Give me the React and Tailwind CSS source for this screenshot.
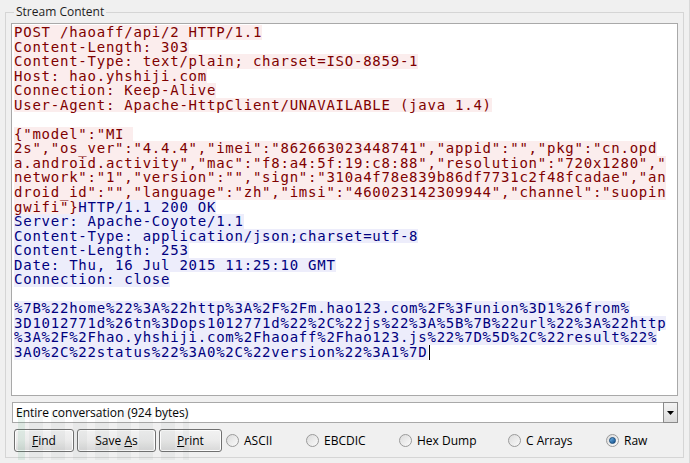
import React from 'react'

const REQ = 'text-[#7f0000] bg-[#fbeded]'
const RES = 'text-[#00007f] bg-[#ededfb]'

const LINES = [
  [['q', 'POST /haoaff/api/2 HTTP/1.1']],
  [['q', 'Content-Length: 303']],
  [['q', 'Content-Type: text/plain; charset=ISO-8859-1']],
  [['q', 'Host: hao.yhshiji.com']],
  [['q', 'Connection: Keep-Alive']],
  [['q', 'User-Agent: Apache-HttpClient/UNAVAILABLE (java 1.4)']],
  [],
  [['q', '{"model":"MI ']],
  [['q', '2s","os_ver":"4.4.4","imei":"862663023448741","appid":"","pkg":"cn.opd']],
  [['q', 'a.android.activity","mac":"f8:a4:5f:19:c8:88","resolution":"720x1280","']],
  [['q', 'network":"1","version":"","sign":"310a4f78e839b86df7731c2f48fcadae","an']],
  [['q', 'droid_id":"","language":"zh","imsi":"460023142309944","channel":"suopin']],
  [['q', 'gwifi"}'], ['r', 'HTTP/1.1 200 OK']],
  [['r', 'Server: Apache-Coyote/1.1']],
  [['r', 'Content-Type: application/json;charset=utf-8']],
  [['r', 'Content-Length: 253']],
  [['r', 'Date: Thu, 16 Jul 2015 11:25:10 GMT']],
  [['r', 'Connection: close']],
  [],
  [['r', '%7B%22home%22%3A%22http%3A%2F%2Fm.hao123.com%2F%3Funion%3D1%26from%']],
  [['r', '3D1012771d%26tn%3Dops1012771d%22%2C%22js%22%3A%5B%7B%22url%22%3A%22http']],
  [['r', '%3A%2F%2Fhao.yhshiji.com%2Fhaoaff%2Fhao123.js%22%7D%5D%2C%22result%22%']],
  [['r', '3A0%2C%22status%22%3A0%2C%22version%22%3A1%7D']],
]

function Radio({ label, checked, width }) {
  return (
    <div className="flex items-center gap-[5px]" style={width ? { width } : undefined}>
      <div className="w-[13px] h-[13px] rounded-full border border-[#9a9a9a] bg-gradient-to-br from-[#dcdcdc] to-[#fafafa] flex items-center justify-center">
        {checked && (
          <div className="w-[7px] h-[7px] rounded-full bg-gradient-to-br from-[#6fb3e8] to-[#0c4f8c] border border-[#174a7a]" />
        )}
      </div>
      <span>{label}</span>
    </div>
  )
}

function Btn({ children, w }) {
  return (
    <button
      className="h-[23px] rounded-[3px] border border-[#707070] bg-gradient-to-b from-[#f2f2f2] via-[#ebebeb] to-[#d8d8d8] text-black flex items-center justify-center shadow-[inset_0_0_0_1px_#fcfcfc]"
      style={{ width: w }}
    >
      <span className="whitespace-pre">{children}</span>
    </button>
  )
}

export default function App() {
  return (
    <div className="w-[690px] h-[463px] bg-[#f0f0f0] relative overflow-hidden border-r border-[#d9d9d9] font-['Open_Sans',sans-serif] text-[12px] text-black">
      <fieldset className="ml-[5px] mt-[4px] w-[679px] h-[454px] border border-[#d5d5d5] px-[5px] pt-[3px]">
        <legend className="ml-[3px] px-[2px] leading-[16px] text-[12px] text-[#1e1e1e]">Stream Content</legend>

        <div className="h-[373px] bg-white border border-[#a9a9a9] pl-[2px] pt-[1px] font-['DejaVu_Sans_Mono',monospace] text-[14px] tracking-[0.76px]">
          {LINES.map((segs, i) => (
            <div key={i} className="h-[14.55px] whitespace-pre flex relative" style={{ zIndex: LINES.length - i }}>
              {segs.map(([k, t], j) => (
                <span key={j} className={`inline-block h-full leading-[14.55px] ${k === 'q' ? REQ : RES}`}>{t}</span>
              ))}
              {i === LINES.length - 1 && <span className="inline-block w-px h-full bg-black ml-[1px]" />}
            </div>
          ))}
        </div>

        <div className="mt-[6px] ml-[1px] w-[666px] h-[21px] bg-white border border-[#a9a9a9] flex items-center relative">
          <span className="pl-[3px] text-[12px]">Entire conversation (924 bytes)</span>
          <div className="absolute right-[-1px] top-[-1px] w-[15px] h-[21px] border border-[#8a8a8a] bg-gradient-to-b from-[#f4f4f4] to-[#dcdcdc] flex items-center justify-center">
            <svg width="7" height="4" viewBox="0 0 7 4"><path d="M0 0h7L3.5 4z" fill="#000" /></svg>
          </div>
        </div>

        <div className="mt-[6px] flex items-center h-[23px]">
          <div className="ml-[3px] flex gap-[3px]">
            <Btn w={60}><span className="underline">F</span>ind</Btn>
            <Btn w={79}>Save <span className="underline">A</span>s</Btn>
            <Btn w={63}><span className="underline">P</span>rint</Btn>
          </div>
          <div className="ml-[4px] flex items-center">
            <Radio label="ASCII" width={80} />
            <Radio label="EBCDIC" width={93} />
            <Radio label="Hex Dump" width={109} />
            <Radio label="C Arrays" width={98} />
            <Radio label="Raw" checked />
          </div>
        </div>
      </fieldset>

      <div className="absolute left-[18px] top-[410px] pointer-events-none select-none flex items-end opacity-[0.1]">
        <div className="w-[7px] h-[50px] bg-[#3aa36b] mr-[4px]" />
        <div className="w-[160px] h-[50px] bg-[repeating-linear-gradient(90deg,#6d7a73_0_14px,transparent_14px_22px)] opacity-60" />
      </div>
    </div>
  )
}
